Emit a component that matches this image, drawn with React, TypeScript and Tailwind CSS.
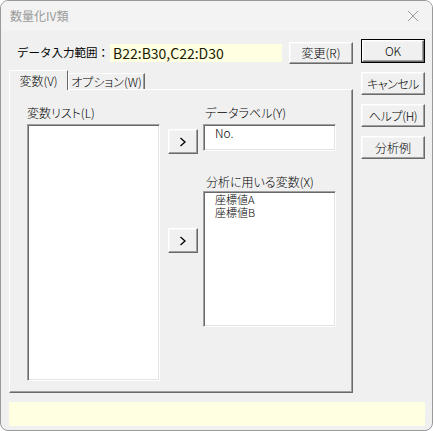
import React from "react";

const raised =
  "border border-t-white border-l-white border-b-[#696969] border-r-[#696969] shadow-[inset_-1px_-1px_0_#a0a0a0,inset_1px_1px_0_#f7f7f7] bg-[#f0f0f0]";
const sunken =
  "border border-t-[#a0a0a0] border-l-[#a0a0a0] border-b-white border-r-white shadow-[inset_1px_1px_0_#696969,inset_-1px_-1px_0_#e3e3e3] bg-white";

function Btn({ children, cls }: { children: React.ReactNode; cls: string }) {
  return (
    <div className={`${raised} ${cls} flex items-center justify-center text-[12px] leading-none whitespace-nowrap text-black`}>
      {children}
    </div>
  );
}

function Chevron() {
  return (
    <svg width="8" height="10" viewBox="0 0 8 10">
      <path d="M1.5 1 L6 5 L1.5 9" stroke="#000" strokeWidth="1.3" fill="none" />
    </svg>
  );
}

export default function App() {
  return (
    <div
      className="w-[433px] h-[431px] bg-white [font-feature-settings:'palt'] font-light whitespace-nowrap"
      style={{ fontFamily: '"Noto Sans CJK JP", "Noto Sans", sans-serif' }}
    >
      <div className="w-[433px] h-[431px] rounded-[8px] border border-[#9a9a9a] bg-[#f0f0f0] flex flex-col overflow-hidden">
        {/* title bar */}
        <div className="h-[30px] shrink-0 bg-[#f3f3f3] flex items-center justify-between pl-[9px] pr-[10px]">
          <span className="text-[12px] font-normal text-[#9a9a9a] leading-none">数量化IV類</span>
          <svg width="12" height="12" viewBox="0 0 12 12" className="mr-[3px]">
            <path d="M1 1 L11 11 M11 1 L1 11" stroke="#9a9a9a" strokeWidth="1" fill="none" />
          </svg>
        </div>
        {/* body */}
        <div className="flex-1 flex flex-col pl-[8px] pr-[7px] pt-[8px]">
          <div className="flex gap-[8px]">
            {/* left column */}
            <div className="w-[344px] flex flex-col">
              <div className="flex items-center h-[24px] mt-[2px]">
                <span className="ml-[8px] w-[93px] text-[11.5px] font-normal text-black leading-none [font-feature-settings:normal]">データ入力範囲：</span>
                <div className="w-[172px] h-[18px] bg-[#ffffe1] flex items-center pl-[3px] text-[14px] font-normal text-[#1a1a00] leading-none">
                  B22:B30,C22:D30
                </div>
                <Btn cls="ml-[7px] w-[64px] h-[22px]">変更(R)</Btn>
              </div>
              {/* tabs */}
              <div className="flex items-end h-[19px] mt-[5px] relative z-10">
                <div className="h-[20px] w-[59px] bg-[#f0f0f0] border-t border-l border-white border-r border-r-[#696969] flex items-center justify-center text-[12px] leading-none -mb-[1px]">
                  変数(V)
                </div>
                <div className="h-[16px] w-[77px] border-t border-l border-white border-r border-r-[#696969] shadow-[inset_-1px_0_0_#a0a0a0] flex items-center justify-center text-[12px] leading-none">
                  オプション(W)
                </div>
              </div>
              <div className="h-[304px] border border-t-white border-l-white border-b-[#696969] border-r-[#696969] shadow-[inset_-1px_-1px_0_#a0a0a0] flex pl-[17px] pt-[17px]">
                <div className="flex flex-col w-[133px]">
                  <span className="text-[12px] leading-none h-[17px]">変数リスト(L)</span>
                  <div className={`${sunken} h-[257px]`}></div>
                </div>
                <div className="flex flex-col ml-[8px] w-[30px]">
                  <Btn cls="mt-[22px] w-[30px] h-[25px]">
                    <Chevron />
                  </Btn>
                  <Btn cls="mt-[74px] w-[30px] h-[25px]">
                    <Chevron />
                  </Btn>
                </div>
                <div className="flex flex-col ml-[5px] w-[133px]">
                  <span className="text-[12px] leading-none h-[17px] pl-[2px]">データラベル(Y)</span>
                  <div className={`${sunken} h-[27px] pl-[11px] pt-[1px] text-[12px] leading-[14px]`}>No.</div>
                  <span className="text-[12px] leading-none h-[12px] mt-[25px] pl-[3px]">分析に用いる変数(X)</span>
                  <div className={`${sunken} h-[136px] mt-[3px] pl-[11px] pt-[1px] text-[11px] leading-[13px]`}>
                    <div className="h-[13px]">座標値A</div>
                    <div className="h-[13px]">座標値B</div>
                  </div>
                </div>
              </div>
            </div>
            {/* right column */}
            <div className="flex flex-col gap-[9px] w-[64px]">
              <div className="w-[64px] h-[24px] border border-black">
                <Btn cls="w-full h-full">OK</Btn>
              </div>
              <Btn cls="w-[64px] h-[23px] tracking-[-0.5px]">キャンセル</Btn>
              <Btn cls="w-[64px] h-[23px] tracking-[-0.3px]">ヘルプ(H)</Btn>
              <Btn cls="w-[64px] h-[23px]">分析例</Btn>
            </div>
          </div>
          <div className="mt-[9px] h-[24px] bg-[#ffffe1] w-[416px]"></div>
        </div>
      </div>
    </div>
  );
}
